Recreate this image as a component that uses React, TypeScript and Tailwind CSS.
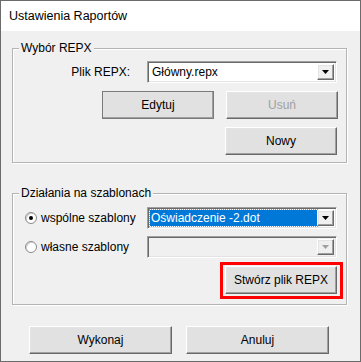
import type { ReactNode } from 'react';

const raised =
  'border border-t-white border-l-white border-r-[#696969] border-b-[#696969] shadow-[inset_-1px_-1px_0_#a0a0a0,inset_1px_1px_0_#e3e3e3] bg-[#e1e1e1]';

const Button = ({
  label,
  className = '',
  disabled = false,
}: {
  label: string;
  className?: string;
  disabled?: boolean;
}) => (
  <button
    className={`${raised} flex items-center justify-center ${disabled ? 'text-[#a0a0a0]' : 'text-black'} ${className}`}
  >
    {label}
  </button>
);

const Arrow = ({ disabled = false }: { disabled?: boolean }) => (
  <div className={`${raised} w-[17px] h-full flex items-center justify-center bg-[#f0f0f0]`}>
    <svg width="7" height="4" viewBox="0 0 7 4">
      <polygon points="0,0 7,0 3.5,4" fill={disabled ? '#a0a0a0' : '#000'} />
    </svg>
  </div>
);

const Combo = ({
  children,
  disabled = false,
}: {
  children?: ReactNode;
  disabled?: boolean;
}) => (
  <div
    className={`w-[190px] h-[22px] flex border border-t-[#a0a0a0] border-l-[#a0a0a0] border-r-white border-b-white shadow-[inset_1px_1px_0_#696969,inset_-1px_-1px_0_#e3e3e3] p-[2px] ${disabled ? 'bg-[#f0f0f0]' : 'bg-white'}`}
  >
    <div className="flex-1 flex items-center min-w-0">{children}</div>
    <Arrow disabled={disabled} />
  </div>
);

const Radio = ({ checked }: { checked: boolean }) => (
  <div className="w-[12px] h-[12px] rounded-full border border-[#8a8a8a] bg-white flex items-center justify-center shadow-[inset_1px_1px_0_#d0d0d0]">
    {checked && <div className="w-[4px] h-[4px] rounded-full bg-black" />}
  </div>
);

const GroupBox = ({
  title,
  className = '',
  children,
}: {
  title: string;
  className?: string;
  children: ReactNode;
}) => (
  <div
    className={`relative w-[335px] border border-[#b4b4b4] shadow-[1px_1px_0_#fff,inset_1px_1px_0_#fff] ${className}`}
  >
    <span className="absolute -top-[9px] left-[6px] px-[2px] bg-[#f0f0f0] leading-[16px]">
      {title}
    </span>
    {children}
  </div>
);

const App = () => {
  return (
    <div
      className="w-[361px] h-[362px] border border-[#6b6b6b] bg-[#f0f0f0] flex flex-col text-[12px] text-black"
      style={{ fontFamily: '"Liberation Sans", Arial, sans-serif' }}
    >
      <div className="h-[30px] bg-white flex items-center pl-[8px] text-[12.5px]">
        Ustawienia Raportów
      </div>

      <div className="flex-1 px-[11px] pt-[17px]">
        <GroupBox title="Wybór REPX" className="h-[115px] pt-[12px]">
          <div className="flex items-center h-[22px]">
            <div className="w-[117px] text-right">Plik REPX:</div>
            <div className="ml-[17px]">
              <Combo>
                <span className="pl-[2px]">Główny.repx</span>
              </Combo>
            </div>
          </div>
          <div className="flex mt-[8px] ml-[89px] gap-[12px]">
            <Button label="Edytuj" className="w-[112px] h-[28px] outline outline-1 outline-[#7a7a7a] -outline-offset-1" />
            <Button label="Usuń" disabled className="w-[112px] h-[28px]" />
          </div>
          <div className="flex mt-[8px] ml-[212px]">
            <Button label="Nowy" className="w-[112px] h-[28px]" />
          </div>
        </GroupBox>

        <GroupBox title="Działania na szablonach" className="h-[112px] mt-[30px] pt-[13px]">
          <div className="flex items-center h-[22px]">
            <div className="w-[134px] flex items-center pl-[12px] gap-[4px]">
              <Radio checked />
              <span>wspólne szablony</span>
            </div>
            <Combo>
              <div className="w-full h-full bg-[#0078d7] outline outline-1 outline-dotted outline-[#e08a2c] flex items-center text-white pl-[1px]">
                Oświadczenie -2.dot
              </div>
            </Combo>
          </div>
          <div className="flex items-center h-[22px] mt-[7px]">
            <div className="w-[134px] flex items-center pl-[12px] gap-[4px]">
              <Radio checked={false} />
              <span>własne szablony</span>
            </div>
            <Combo disabled />
          </div>
          <div className="flex mt-[8px] ml-[212px]">
            <div className="relative">
              <Button label="Stwórz plik REPX" className="w-[112px] h-[28px]" />
              <div className="absolute -left-[5px] -top-[4px] -right-[6px] -bottom-[5px] border-[3px] border-[#ff0000] pointer-events-none" />
            </div>
          </div>
        </GroupBox>

        <div className="flex mt-[21px] ml-[17px] gap-[14px]">
          <Button label="Wykonaj" className="w-[143px] h-[28px]" />
          <Button label="Anuluj" className="w-[143px] h-[28px]" />
        </div>
      </div>
    </div>
  );
};

export default App;
